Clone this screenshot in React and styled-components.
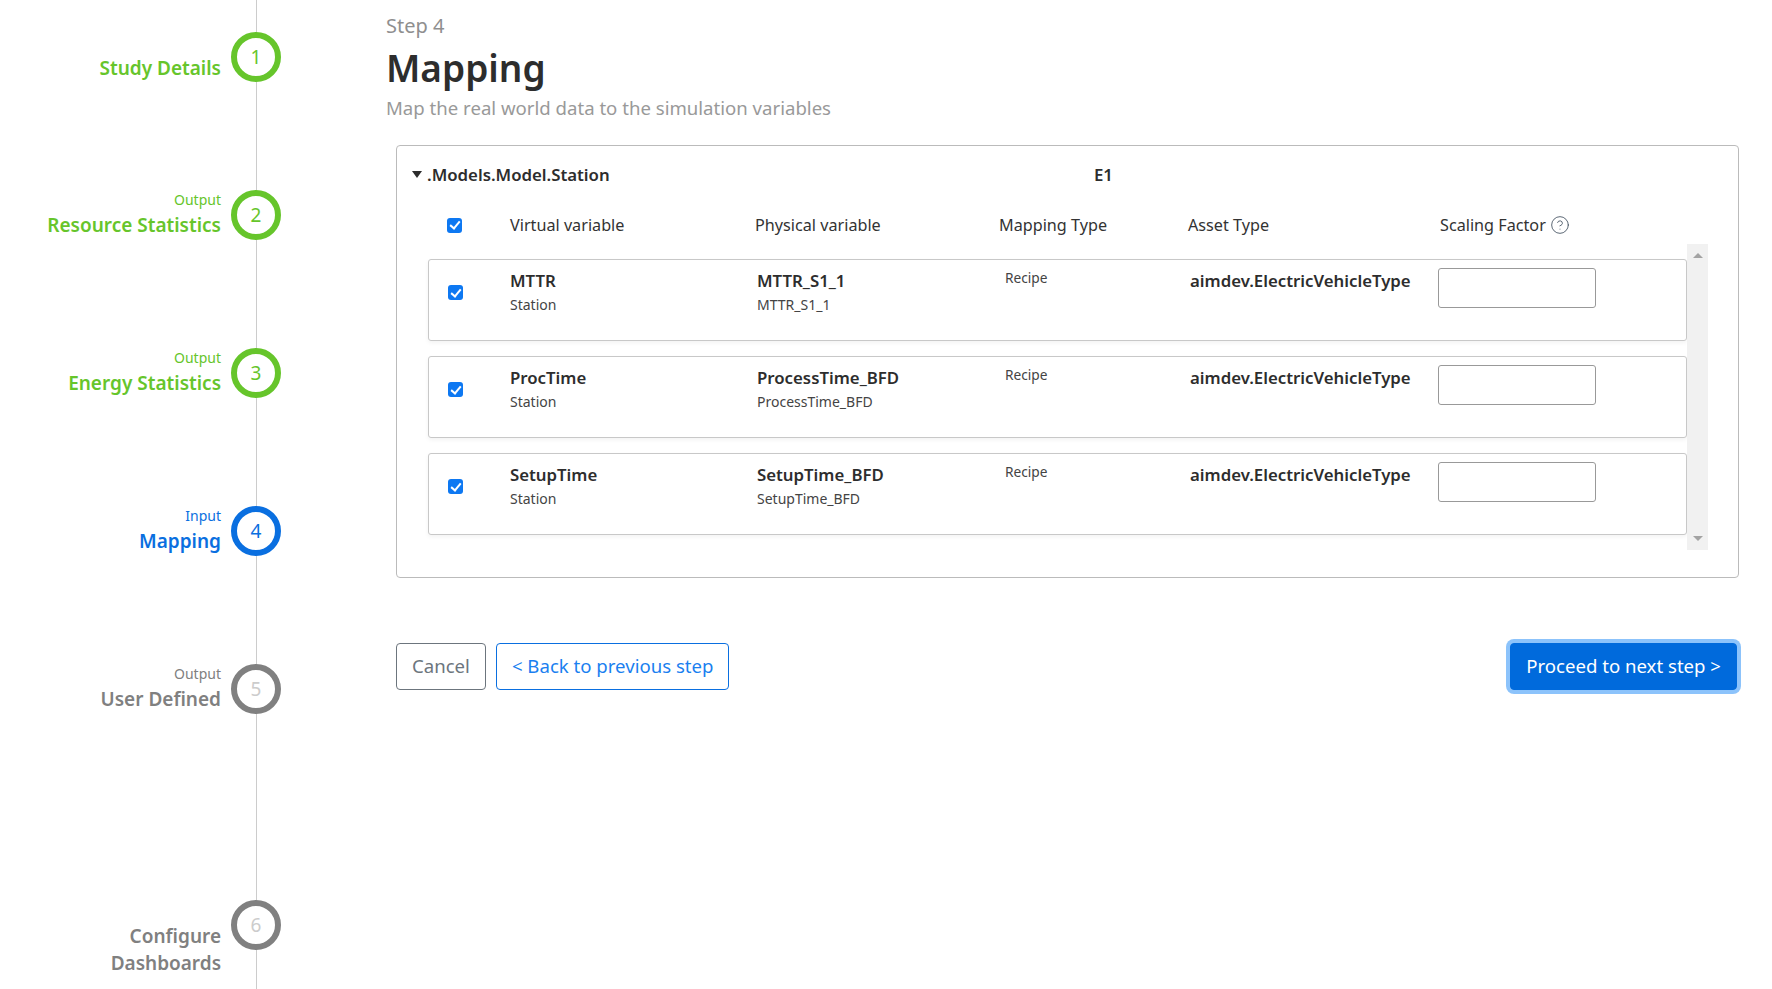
import styled, { createGlobalStyle } from "styled-components"
import { CircleHelp } from "lucide-react"

const GlobalStyle = createGlobalStyle`
  html, body { margin: 0; padding: 0; background: #fff; }
  body { font-family: "Noto Sans", "Open Sans", sans-serif; color: #2d2d2d; }
`

const tones = { done: "#66c52b", active: "#0a6fe0", todo: "#808080" }

const Page = styled.div`
  display: flex;
  height: 989px;
  overflow: hidden;
`

const Sidebar = styled.nav`
  position: relative;
  flex: 0 0 386px;
  padding-top: 32px;
  box-sizing: border-box;

  &::before {
    content: "";
    position: absolute;
    left: 256px;
    top: 0;
    bottom: 0;
    width: 1px;
    background: #cccccc;
  }
`

const Step = styled.div`
  display: flex;
  height: ${p => p.$height}px;
  width: 281px;
  color: ${p => tones[p.$tone]};
`

const StepLabel = styled.div`
  flex: 0 0 221px;
  text-align: right;
`

const StepCaption = styled.div`
  font-size: 14px;
  line-height: 20px;
  height: 22px;

  &:empty { height: 23px; }
`

const StepName = styled.div`
  font-size: 19px;
  font-weight: 600;
  line-height: 27px;
`

const StepCircle = styled.div`
  position: relative;
  flex: 0 0 50px;
  height: 50px;
  margin-left: 10px;
  padding-bottom: 1px;
  box-sizing: border-box;
  border: 6px solid currentColor;
  border-radius: 50%;
  background: #fff;
  display: flex;
  align-items: center;
  justify-content: center;
  font-size: 19px;

  span { color: ${p => (p.$tone === "todo" ? "#cccccc" : "currentColor")}; }
`

const Main = styled.main`
  flex: 1;
  padding: 14px 33px 0 0;
  min-width: 0;
`

const StepNo = styled.div`
  font-size: 20px;
  line-height: 24px;
  color: #8f8f8f;
`

const Title = styled.h1`
  margin: 5px 0 0;
  font-size: 37px;
  line-height: 50px;
  font-weight: 600;
  color: #2d2d2d;
`

const Subtitle = styled.p`
  margin: 2px 0 0;
  font-size: 18.6px;
  line-height: 25px;
  color: #999999;
`

const Panel = styled.section`
  margin: 25px 0 0 10px;
  height: 433px;
  box-sizing: border-box;
  border: 1px solid #bbbbbb;
  border-radius: 4px;
  padding: 15px 30px 0 15px;
`

const GroupHead = styled.div`
  display: flex;
  align-items: center;
  height: 27px;
  font-size: 16.8px;
  font-weight: 600;
`

const Caret = styled.span`
  width: 0;
  height: 0;
  margin: 0 5px 0 0;
  border-left: 5px solid transparent;
  border-right: 5px solid transparent;
  border-top: 7px solid #2d2d2d;
`

const GroupName = styled.span`
  flex: 0 0 667px;
`

const HeadRow = styled.div`
  display: grid;
  grid-template-columns: 50px 48px 245px 244px 189px 252px 1fr;
  align-items: center;
  height: 30px;
  margin-top: 22px;
  font-size: 16.2px;
  color: #333;
`

const HeadCell = styled.div`
  display: flex;
  align-items: center;
  gap: 4px;
  white-space: nowrap;
`

const Check = styled.input.attrs({ type: "checkbox" })`
  appearance: none;
  display: flex;
  align-items: center;
  justify-content: center;
  width: 15px;
  height: 15px;
  margin: 0;
  border-radius: 3px;
  background: #0d78f2;
  justify-self: end;

  &::after {
    content: "";
    width: 4px;
    height: 8px;
    margin-top: -2px;
    border-right: 2px solid #fff;
    border-bottom: 2px solid #fff;
    transform: rotate(40deg);
  }
`

const Scroller = styled.div`
  display: flex;
  margin: 4px 0 0 16px;
  height: 306px;
`

const Rows = styled.div`
  flex: 1;
  min-width: 0;
  padding-top: 15px;
  display: flex;
  flex-direction: column;
  gap: 15px;
`

const Scrollbar = styled.div`
  flex: 0 0 21px;
  background: #f1f1f1;
  display: flex;
  flex-direction: column;
  justify-content: space-between;
  align-items: center;
  padding: 9px 0;
  box-sizing: border-box;
`

const ScrollArrow = styled.span`
  width: 0;
  height: 0;
  border-left: 5px solid transparent;
  border-right: 5px solid transparent;
  ${p => (p.$down ? "border-top" : "border-bottom")}: 5px solid #a3a3a3;
`

const Row = styled.div`
  display: grid;
  grid-template-columns: 81px 247px 248px 185px 248px 158px;
  height: 82px;
  flex: none;
  box-sizing: border-box;
  border: 1px solid #c8c8c8;
  border-radius: 3px;
  box-shadow: 0 2px 4px rgba(0, 0, 0, 0.05);
  background: #fff;
`

const RowCheck = styled.div`
  display: flex;
  padding: 25px 0 0 19px;
`

const NameCell = styled.div`
  padding-top: 10px;
`

const Strong = styled.div`
  font-size: 16.8px;
  font-weight: 600;
  line-height: 22px;
  white-space: nowrap;
`

const Sub = styled.div`
  font-size: 14px;
  line-height: 20px;
  margin-top: 3px;
  color: #444;
`

const Recipe = styled.div`
  font-size: 13.7px;
  line-height: 18px;
  padding-top: 9px;
  color: #444;
`

const ScaleInput = styled.input`
  width: 158px;
  height: 40px;
  margin-top: 8px;
  box-sizing: border-box;
  border: 1px solid #999999;
  border-radius: 3px;
  outline: none;
`

const Actions = styled.div`
  display: flex;
  gap: 10px;
  margin: 65px 0 0 10px;
  align-items: center;
`

const Button = styled.button`
  height: 47px;
  padding: 0 15px 2px;
  font: 400 18.6px "Noto Sans", sans-serif;
  background: #fff;
  border-radius: 4px;
  border: 1px solid ${p => (p.$blue ? "#0a6fe0" : "#6c757d")};
  color: ${p => (p.$blue ? "#1a7ff0" : "#6c757d")};
`

const Primary = styled(Button)`
  margin-left: auto;
  margin-right: 2px;
  background: #006adc;
  border-color: #006adc;
  color: #fff;
  box-shadow: 0 0 0 4px #8cc3fb;
`

const steps = [
  { n: 1, name: "Study Details", tone: "done", height: 158 },
  { n: 2, caption: "Output", name: "Resource Statistics", tone: "done", height: 158 },
  { n: 3, caption: "Output", name: "Energy Statistics", tone: "done", height: 158 },
  { n: 4, caption: "Input", name: "Mapping", tone: "active", height: 158 },
  { n: 5, caption: "Output", name: "User Defined", tone: "todo", height: 236 },
  { n: 6, name: <>Configure<br />Dashboards</>, tone: "todo", height: 64 },
]

const rows = [
  { name: "MTTR", physical: "MTTR_S1_1" },
  { name: "ProcTime", physical: "ProcessTime_BFD" },
  { name: "SetupTime", physical: "SetupTime_BFD" },
]

export default function App() {
  return (
    <Page>
      <GlobalStyle />
      <Sidebar>
        {steps.map(s => (
          <Step key={s.n} $height={s.height} $tone={s.tone}>
            <StepLabel>
              <StepCaption>{s.caption}</StepCaption>
              <StepName>{s.name}</StepName>
            </StepLabel>
            <StepCircle $tone={s.tone}><span>{s.n}</span></StepCircle>
          </Step>
        ))}
      </Sidebar>
      <Main>
        <StepNo>Step 4</StepNo>
        <Title>Mapping</Title>
        <Subtitle>Map the real world data to the simulation variables</Subtitle>
        <Panel>
          <GroupHead>
            <Caret />
            <GroupName>.Models.Model.Station</GroupName>
            <span>E1</span>
          </GroupHead>
          <HeadRow>
            <Check defaultChecked />
            <span />
            <HeadCell>Virtual variable</HeadCell>
            <HeadCell>Physical variable</HeadCell>
            <HeadCell>Mapping Type</HeadCell>
            <HeadCell>Asset Type</HeadCell>
            <HeadCell>Scaling Factor <CircleHelp size={20} strokeWidth={1} color="#3c4a5a" /></HeadCell>
          </HeadRow>
          <Scroller>
            <Rows>
              {rows.map(r => (
                <Row key={r.name}>
                  <RowCheck><Check defaultChecked /></RowCheck>
                  <NameCell>
                    <Strong>{r.name}</Strong>
                    <Sub>Station</Sub>
                  </NameCell>
                  <NameCell>
                    <Strong>{r.physical}</Strong>
                    <Sub>{r.physical}</Sub>
                  </NameCell>
                  <Recipe>Recipe</Recipe>
                  <NameCell><Strong>aimdev.ElectricVehicleType</Strong></NameCell>
                  <ScaleInput />
                </Row>
              ))}
            </Rows>
            <Scrollbar>
              <ScrollArrow />
              <ScrollArrow $down />
            </Scrollbar>
          </Scroller>
        </Panel>
        <Actions>
          <Button>Cancel</Button>
          <Button $blue>&lt; Back to previous step</Button>
          <Primary>Proceed to next step &gt;</Primary>
        </Actions>
      </Main>
    </Page>
  )
}
